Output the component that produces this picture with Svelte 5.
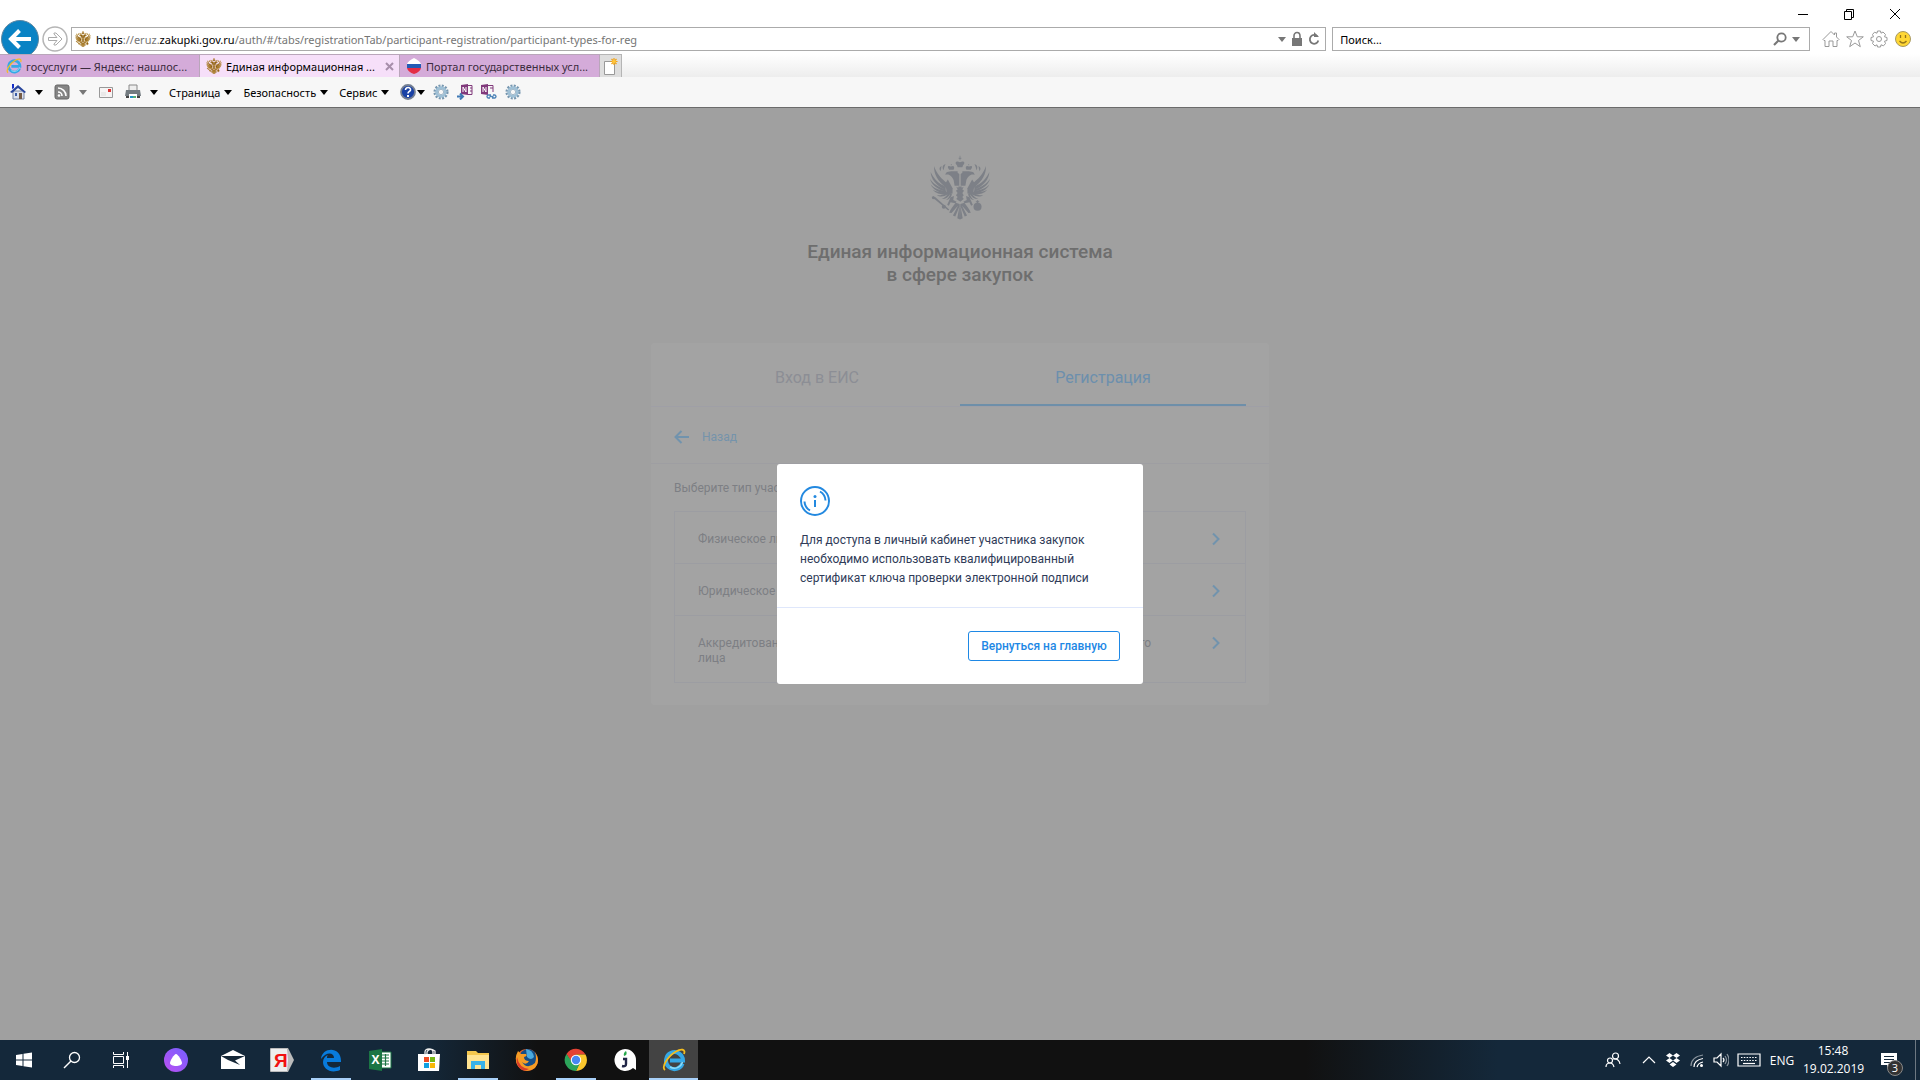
<script>
  let search = '';
  let activeTab = 'register';

  const participantTypes = [
    'Физическое лицо',
    'Юридическое лицо',
    'Аккредитованный филиал или представительство иностранного юридического лица',
  ];
</script>

{#snippet eagle()}
  <svg class="eagle" viewBox="58 28 184 192" aria-hidden="true">
    <g id="half">
      <path d="M73 60C72 84 84 106 109 124L114 112C96 100 80 82 73 60Z" />
      <path d="M63 78C63 98 80 120 107 131L108 122C88 113 72 99 63 78Z" />
      <path d="M61 98C65 116 84 131 108 136L107 129C88 124 71 114 61 98Z" />
      <path d="M63 115C70 131 88 139 108 142L110 134C90 133 74 127 63 115Z" />
      <path d="M69 131C78 142 94 146 110 145L112 137C96 140 80 138 69 131Z" />
      <path d="M81 147C90 153 103 152 113 145L117 137C104 144 92 148 81 147Z" />
      <path d="M96 158C106 159 116 153 121 143L117 138C112 148 104 155 96 158Z" />
      <path d="M108 161C118 160 125 152 126 143L121 142C119 151 114 158 108 161Z" />
      <path d="M106 112L114 100L128 126V142L112 145Z" />
      <path d="M107 87C107 76 116 75 143 76V80L148 84V119H134L131 102C127 91 116 82 107 87Z" />
      <path d="M118 71C110 61 116 58 123 62C130 57 136 62 131 71Z" />
      <path d="M101 73C96 63 99 57 107 54L104 62ZM92 76C87 68 89 63 95 60L94 68Z" />
      <path d="M123 54H125V58H123Z" />
      <path d="M122 153L132 149L130 161L140 166L136 171L122 168L117 178L112 175Z" />
      <path d="M149 173L137 169C130 178 121 189 118 199L125 200L144 178L129 207L136 210L148 181L142 215L150 219Z" />
    </g>
    <use href="#half" transform="matrix(-1 0 0 1 300 0)" />
    <path d="M149 30H151V36H154V39H151V43H149V39H146V36H149ZM141 58C132 49 140 43 150 49C160 43 168 49 159 58L157 64H143Z" />
    <path d="M139 122L145 125V121H155V125L161 122L157 130L162 134L157 140L161 147L157 152L161 158L151 166L139 158L143 152L138 147L143 140L138 134L143 130Z" />
    <path d="M71 149L77 153L118 189L115 192L75 159L68 158L66 152Z" />
    <circle cx="102" cy="181" r="6" />
    <circle cx="202" cy="181" r="12" />
    <path d="M200 162H204V170H200ZM197 165H207V168H197Z" />
  </svg>
{/snippet}

{#snippet gear()}
  <svg class="gear" viewBox="0 0 18 18" aria-hidden="true">
    <circle cx="9" cy="9" r="7" fill="none" stroke="#7797b0" stroke-width="3" stroke-dasharray="2.2 1.465" />
    <circle cx="9" cy="9" r="4.8" fill="none" stroke="#9fc0d6" stroke-width="3.2" />
    <circle cx="9" cy="9" r="3" fill="#f7f7f7" stroke="#7797b0" stroke-width=".7" />
  </svg>
{/snippet}

{#snippet arrow()}
  <svg class="arrow" viewBox="0 0 8 5" aria-hidden="true"><path d="M0 0H8L4 5Z" fill="currentColor" /></svg>
{/snippet}

{#snippet ie()}
  <svg class="ie" viewBox="0 0 24 24" aria-hidden="true">
    <path d="M20.5 15.5A8.5 8.5 0 1 1 21 12.5H8" fill="none" stroke="#35a8e6" stroke-width="4" />
    <path d="M20.5 14A8.5 8.5 0 0 1 8 19" fill="none" stroke="#8bdcf8" stroke-width="1.5" />
    <path d="M3 22C-1 19 6 8 14 3.5C19 .5 24 1 22 6" fill="none" stroke="#f3bd20" stroke-width="1.8" />
  </svg>
{/snippet}

<div class="desktop">
  <header class="browser">
    <div class="window-buttons">
      <button aria-label="Свернуть"><svg viewBox="0 0 12 12"><path d="M1 6.5H11" /></svg></button>
      <button aria-label="Восстановить"><svg viewBox="0 0 12 12"><path d="M1.5 3.5H8.5V11.5H1.5ZM3.5 3V1.5H10.5V9.5H9" /></svg></button>
      <button aria-label="Закрыть"><svg viewBox="0 0 12 12"><path d="M1 1L11 11M11 1L1 11" /></svg></button>
    </div>

    <div class="address-row">
      <button class="back" aria-label="Назад">
        <svg viewBox="0 0 38 38">
          <circle cx="19" cy="19" r="18.5" fill="#0a83c4" stroke="#5d86a0" />
          <path d="M30 19H11M18.5 10.500L10 19L18.500 27.500" fill="none" stroke="#fff" stroke-width="4" />
        </svg>
      </button>
      <button class="forward" aria-label="Вперед">
        <svg viewBox="0 0 26 26">
          <circle cx="13" cy="13" r="12" fill="#fff" stroke="#b5b5b5" stroke-width="1.500" />
          <path d="M6.500 11.500H15L12 8V7H14L20 13L14 19H12V18L15 14.500H6.500Z" fill="#fff" stroke="#aaa" />
        </svg>
      </button>
      <div class="url">
        <span class="favicon gold">{@render eagle()}</span>
        <span class="url-text"><b>https</b>://eruz.<b>zakupki.gov.ru</b>/auth/#/tabs/registrationTab/participant-registration/participant-types-for-reg</span>
        <span class="url-tools">
          {@render arrow()}
          <svg viewBox="0 0 12 16" width="12" height="16"><path d="M1 7H11V15H1Z" fill="#777" /><path d="M3 8V5A3 3.500 0 0 1 9 5V8" fill="none" stroke="#777" stroke-width="1.600" /></svg>
          <svg viewBox="0 0 12 16" width="12" height="16"><path d="M9.500 5.500A4.300 4.500 0 1 0 10.300 9.500" fill="none" stroke="#777" stroke-width="1.800" /><path d="M6 1L11 6H6Z" fill="#777" /></svg>
        </span>
      </div>
      <div class="search">
        <input type="text" bind:value={search} placeholder="Поиск..." aria-label="Поиск" />
        <svg viewBox="0 0 14 14" width="14" height="14"><circle cx="8.500" cy="5.500" r="4.200" fill="none" stroke="#777" stroke-width="1.800" /><path d="M5.500 8.500L1 13" stroke="#777" stroke-width="2.200" /></svg>
        {@render arrow()}
      </div>
      <div class="browser-icons">
        <button aria-label="Домашняя страница"><svg viewBox="0 0 18 18"><path d="M1 9.500L9 1.500L12.500 5V3H14.500V7L17 9.500L16 10.500H15V16.500H11V11H7V16.500H3V10.500H2Z" /></svg></button>
        <button aria-label="Избранное"><svg viewBox="0 0 18 18"><path d="M9 1L11.300 6.800H17.300L12.500 10.500L14.300 16.700L9 13L3.700 16.700L5.500 10.500L.7 6.800H6.700Z" /></svg></button>
        <button aria-label="Сервис"><svg viewBox="0 0 18 18"><path d="M7.500 1H10.500L11 3.200L13 2L15.500 4.500L14.500 6.800L17 7.500V10.500L14.500 11.200L15.500 13.500L13.500 15.800L11 14.800L10.500 17H7.500L7 14.800L5 16L2.500 13.500L3.500 11.200L1 10.500V7.500L3.500 6.800L2.500 4.500L4.500 2.200L7 3.200Z" /><circle cx="9" cy="9" r="2.500" /></svg></button>
        <button aria-label="Отзыв"><svg viewBox="0 0 18 18"><circle cx="9" cy="9" r="7.500" fill="#ffd735" stroke="#a89a63" /><path d="M6.500 5V8M11.500 5V8M5.500 11Q9 15 12.500 11" fill="none" stroke="#94751b" stroke-width="1.300" /></svg></button>
      </div>
    </div>

    <div class="tab-row">
      <button class="browser-tab">
        <span class="favicon">{@render ie()}</span>
        <span class="tab-title">госуслуги — Яндекс: нашлос...</span>
      </button>
      <button class="browser-tab current">
        <span class="favicon gold">{@render eagle()}</span>
        <span class="tab-title">Единая информационная ...</span>
        <svg viewBox="0 0 9 9" width="9" height="9"><path d="M1 1L8 8M8 1L1 8" stroke="#a78eaa" stroke-width="2" /></svg>
      </button>
      <button class="browser-tab">
        <span class="favicon">
          <svg viewBox="0 0 16 16"><path d="M1 6Q2 3 8 0Q14 3 15 6Z" fill="#fff" /><path d="M1 6H15V10H1Z" fill="#245bb5" /><path d="M1 10H15Q14 14 8 16Q2 14 1 10Z" fill="#e42d45" /></svg>
        </span>
        <span class="tab-title">Портал государственных усл...</span>
      </button>
      <button class="new-tab" aria-label="Новая вкладка">
        <svg viewBox="0 0 16 18"><path d="M1.500 4.500H11.500V17.500H1.500Z" fill="#fff" stroke="#999" /><path d="M11 1V8M7.500 4.500H14.500M8.500 2L13.500 7M13.500 2L8.500 7" stroke="#f0a216" stroke-width="1.200" /><circle cx="11" cy="4.500" r="1.800" fill="#ffc63b" /></svg>
      </button>
    </div>

    <nav class="command-bar">
      <button>
        <svg viewBox="0 0 16 16"><path d="M3 7H14V15H3Z" fill="#dce1ee" stroke="#7783a0" /><path d="M0 8L8 1L16 8L14.500 9L8 4L2 9Z" fill="#28459c" /><path d="M2 0H4V4L2 5Z" fill="#152ec6" /><path d="M9 9H12V15H9Z" fill="#755b46" /><path d="M5 9H7V12H5Z" fill="#3b5ca7" /></svg>
        {@render arrow()}
      </button>
      <button class="muted">
        <svg viewBox="0 0 16 16"><rect x="1" y="1" width="14" height="14" rx="2" fill="#858585" stroke="#666" /><path d="M4 8A4 4 0 0 1 8 12M4 4A8 8 0 0 1 12 12" fill="none" stroke="#fff" stroke-width="1.600" /><circle cx="5" cy="11.500" r="1.300" fill="#fff" /></svg>
        {@render arrow()}
      </button>
      <button aria-label="Почта">
        <svg viewBox="0 0 16 16"><path d="M1.500 3.500H14.500V13.500H1.500Z" fill="#f6f4f4" stroke="#999" /><path d="M10 5H13V8H10Z" fill="#d33" /><path d="M3 9H8M3 11H8" stroke="#ddd" /></svg>
      </button>
      <button>
        <svg viewBox="0 0 16 16"><path d="M4 1H12V7H4Z" fill="#eee" stroke="#888" /><path d="M1 6H15L16 12H0Z" fill="#737b80" /><path d="M1 12H15V14H1Z" fill="#444" /><path d="M4 10H12V15H4Z" fill="#fff" /><path d="M5 12H8V14H5Z" fill="#2393c5" /><path d="M8 12H11V14H8Z" fill="#55ae76" /></svg>
        {@render arrow()}
      </button>
      <button class="menu">Страница {@render arrow()}</button>
      <button class="menu">Безопасность {@render arrow()}</button>
      <button class="menu">Сервис {@render arrow()}</button>
      <div class="addons">
        <button class="help" aria-label="Справка">
          <svg viewBox="0 0 16 16"><circle cx="8" cy="8" r="7" fill="#1941a5" stroke="#747f92" stroke-width="1.800" /><path d="M5.500 6C5.500 2.500 11 3 10.500 6C10.200 7.500 8 7.500 8 9.500" fill="none" stroke="#fff" stroke-width="1.600" /><path d="M7 11H9V13H7Z" fill="#fff" /></svg>
          {@render arrow()}
        </button>
        <button aria-label="Параметры">{@render gear()}</button>
        <button aria-label="Отправить в OneNote">
          <svg viewBox="0 0 16 16"><path d="M4 1L11 0V11L4 10Z" fill="#80397b" /><path d="M11 1.500H15V10.500H11M13 4H15M13 7H15" fill="none" stroke="#80397b" /><path d="M6 8V3L9 8V3" fill="none" stroke="#fff" /><path d="M0 12.500H5M3 9.500L6 12.500L3 15.500" fill="none" stroke="#3e79b5" stroke-width="2" /></svg>
        </button>
        <button aria-label="Связанные заметки OneNote">
          <svg viewBox="0 0 16 16"><path d="M0 1L7 0V11L0 10Z" fill="#80397b" /><path d="M7 1.500H12V8M9 4H12" fill="none" stroke="#80397b" /><path d="M2 8V3L5 8V3" fill="none" stroke="#fff" /><path d="M9 14H7Q5 12.500 7 11H10M12 11H14Q16 12.500 14 14H11M8.500 12.500H12.500" fill="none" stroke="#4d83b7" stroke-width="1.400" /></svg>
        </button>
        <button aria-label="Настройки">{@render gear()}</button>
      </div>
    </nav>
  </header>

  <main class="page">
    <div class="logo">{@render eagle()}</div>
    <h1>Единая информационная система<br />в сфере закупок</h1>

    <section class="card">
      <div class="tabs">
        <button class:active={activeTab === 'login'} on:click={() => (activeTab = 'login')}>Вход в ЕИС</button>
        <button class:active={activeTab === 'register'} on:click={() => (activeTab = 'register')}>Регистрация</button>
      </div>
      <a class="back-link" href="#/tabs/registrationTab">
        <svg viewBox="0 0 16 14" width="16" height="14"><path d="M15 7H2M7.500 1L1.500 7L7.500 13" /></svg>
        Назад
      </a>
      <div class="types">
        <p>Выберите тип участника закупок</p>
        <ul>
          {#each participantTypes as type}
            <li>
              <a href="#/tabs/registrationTab/participant-registration">
                <span>{type}</span>
                <svg viewBox="0 0 8 14" width="8" height="14"><path d="M1 1.500L6.500 7L1 12.500" /></svg>
              </a>
            </li>
          {/each}
        </ul>
      </div>
    </section>

    <div class="overlay">
      <div class="modal" role="dialog" aria-modal="true" aria-labelledby="modal-text">
        <div class="modal-body">
          <svg viewBox="1 1 30 30" width="30" height="30">
            <circle cx="16" cy="16" r="14" stroke-width="2" />
            <path d="M21 6.500A11 11 0 0 1 26.500 15.500M5.500 16.500A11 11 0 0 0 11 25.500M16 15V22" stroke-width="2" />
            <circle class="dot" cx="16" cy="11.500" r="1.500" />
          </svg>
          <p id="modal-text">Для доступа в личный кабинет участника закупок необходимо использовать квалифицированный сертификат ключа проверки электронной подписи</p>
        </div>
        <div class="modal-footer">
          <button>Вернуться на главную</button>
        </div>
      </div>
    </div>
  </main>

  <footer class="taskbar">
    <div class="apps">
      <button class="app" aria-label="Пуск"><svg viewBox="0 0 24 24"><path d="M4 7L10.500 6V11.500H4ZM11.500 5.800L20 4.500V11.500H11.500ZM4 12.500H10.500V18L4 17ZM11.500 12.500H20V19.500L11.500 18.200Z" fill="#fff" /></svg></button>
      <button class="app" aria-label="Поиск"><svg viewBox="0 0 24 24"><circle cx="14.500" cy="9.500" r="5" fill="none" stroke="#fff" stroke-width="1.300" /><path d="M11 13L4 20" stroke="#fff" stroke-width="1.400" /></svg></button>
      <button class="app" aria-label="Представление задач"><svg viewBox="0 0 24 24"><path d="M5.500 8.500H15.500V15.500H5.500ZM5.500 4V6.500H15.500V4M5.500 20V17.500H15.500V20M19.500 4V20" fill="none" stroke="#fff" /><path d="M18 8H21V12H18Z" fill="#fff" /></svg></button>
      <button class="app wide" aria-label="Алиса">
        <svg viewBox="0 0 24 24"><defs><linearGradient id="alice" x1="1" x2="0" y2="1"><stop stop-color="#735fff" /><stop offset="1" stop-color="#bc50f2" /></linearGradient></defs><circle cx="12" cy="12" r="12" fill="url(#alice)" /><path d="M12 6C14 6 18 13 18 15C18 19 6 19 6 15C6 13 10 6 12 6Z" fill="#fff" /></svg>
      </button>
      <button class="app" aria-label="Почта"><svg viewBox="0 0 24 24"><path d="M0 8L12 2L24 8V21H0Z" fill="#fff" /><path d="M0 8H24L14 12.500L19 17L7 12Z" fill="#162838" /></svg></button>
      <button class="app" aria-label="Яндекс"><svg viewBox="0 0 24 24"><path d="M1 0H18L24 12L18 24H1Q0 24 0 23V1Q0 0 1 0Z" fill="#bbb" /><path d="M1 1H17L18 12L17 23H1Z" fill="#eee" /><text x="4" y="19" class="ya">Я</text></svg></button>
      <button class="app open" aria-label="Edge"><svg viewBox="0 0 24 24"><path d="M2 11C3 -1 22 -2 22 13V14H8C8 20 16 21 21 18V22C12 26 4 21 4 14C4 11 6 8 9 7C8 8 8 9 8 10H15C15 5 8 3 2 11Z" fill="#087bdc" /></svg></button>
      <button class="app" aria-label="Excel"><svg viewBox="0 0 24 24"><path d="M10 4H23V20H10Z" fill="#fff" stroke="#1b7544" /><path d="M14 7H21M14 10H21M14 13H21M14 16H21M17.500 6V18" stroke="#1b7544" stroke-width="1.200" /><path d="M1 3L14 1V23L1 21Z" fill="#1b7544" /><text x="3.500" y="16" class="excel">X</text></svg></button>
      <button class="app" aria-label="Магазин"><svg viewBox="0 0 24 24"><path d="M1 6H23L22 23H1Z" fill="#fff" /><path d="M8 7V4Q8 1 12 1Q16 1 16 4V7M10 6V4Q12 -1 18 3V6" fill="none" stroke="#eee" stroke-width="1.300" /><path d="M7 9H12V14H7Z" fill="#ef4c24" /><path d="M13 9H18V14H13Z" fill="#75b817" /><path d="M7 15H12V20H7Z" fill="#11a0e2" /><path d="M13 15H18V20H13Z" fill="#f7b809" /></svg></button>
      <button class="app open" aria-label="Проводник"><svg viewBox="0 0 24 24"><path d="M1 3H10L12 5H23V21H1Z" fill="#f4c74e" /><path d="M1 7H23V21H1Z" fill="#ffe391" /><path d="M5 21V13H19V21H15V17H9V21Z" fill="#38b2e8" /></svg></button>
      <button class="app" aria-label="Firefox"><svg viewBox="0 0 24 24"><circle cx="12" cy="12" r="11" fill="#e8652a" /><circle cx="13" cy="10" r="9" fill="#154d86" /><path d="M11 1Q18 2 19 9Q16 13 12 9Z" fill="#4aa9df" /><path d="M3 3L6 6L11 6Q13 8 9 9Q9 13 14 13Q11 18 7 14Q12 22 20 15Q22 10 20 4Q26 13 20 20Q11 26 4 19Q-2 12 3 3Z" fill="#f59c25" /><path d="M2 9Q4 20 14 21Q8 25 3 18Q1 14 2 9Z" fill="#d93d28" /></svg></button>
      <button class="app open" aria-label="Chrome"><svg viewBox="0 0 24 24"><path d="M2.500 6A11 11 0 0 1 21.500 6.500H12L7 14Z" fill="#e34234" /><path d="M21.500 6.500A11 11 0 0 1 12 23L16 14L12 6.500Z" fill="#fbc72d" /><path d="M2.500 6A11 11 0 0 0 12 23L16 15L8 14Z" fill="#2ca45a" /><circle cx="12" cy="12" r="5.200" fill="#fff" /><circle cx="12" cy="12" r="4.200" fill="#4787f2" /></svg></button>
      <button class="app" aria-label="Jinn"><svg viewBox="0 0 24 24"><path d="M12 1A11 11 0 1 0 20 20L23 22V12A11 11 0 0 0 12 1Z" fill="#fff" /><path d="M10 11H13V16Q13 19 9 18" fill="none" stroke="#222748" stroke-width="2.400" /><path d="M11 8Q10 5 13 3Q15 7 11 8Z" fill="#26a84c" /></svg></button>
      <button class="app running" aria-label="Internet Explorer">{@render ie()}</button>
    </div>

    <div class="tray">
      <svg viewBox="0 0 16 16"><circle cx="10.500" cy="4" r="3" /><circle cx="5" cy="8.500" r="2.500" /><path d="M1 15Q1 11 5 11Q8 11 9 15M8 7Q14 6 15 12" /></svg>
      <svg class="chevron" viewBox="0 0 16 16"><path d="M2 11L8 5L14 11" /></svg>
      <svg viewBox="0 0 16 16"><path class="solid" d="M4.500 1L8 3.500L4.500 6L1 3.500ZM11.500 1L15 3.500L11.500 6L8 3.500ZM4.500 6L8 8.500L4.500 11L1 8.500ZM11.500 6L15 8.500L11.500 11L8 8.500ZM8 10L11.500 12.500L8 15L4.500 12.500Z" /></svg>
      <svg viewBox="0 0 16 16"><path d="M2 14Q2 5 14 3" opacity=".5" /><path d="M5 15Q5 8 14 6.500M8 15Q9 11 14 10" /><circle class="solid" cx="12.500" cy="13.500" r="1.500" /></svg>
      <svg viewBox="0 0 16 16"><path d="M1 6H4L8 2V14L4 10H1ZM10 6Q12 8 10 10" /><path d="M12 4Q15 8 12 12M14 2Q18 8 14 14" opacity=".5" /></svg>
      <svg class="keyboard" viewBox="0 0 24 16"><path d="M1 2H23V14H1Z" /><path d="M4 5.500H20M4 8.500H20" stroke-dasharray="1.500 1.300" /><path d="M6 11.500H18" /></svg>
      <button class="lang">ENG</button>
      <time class="clock" datetime="2019-02-19T15:48">15:48<br />19.02.2019</time>
      <button class="notices" aria-label="Уведомления">
        <svg viewBox="0 0 16 16"><path class="solid" d="M0 1H16V13H9L6 16V13H0Z" /><path class="lines" d="M3 4.500H13M3 7.500H13M3 10.500H9" /></svg>
        <span class="count">3</span>
      </button>
    </div>
  </footer>
</div>

<style>
  :global(body) {
    margin: 0;
  }

  * {
    box-sizing: border-box;
  }

  button {
    padding: 0;
    border: none;
    background: none;
    font: inherit;
    color: inherit;
  }

  a {
    text-decoration: none;
    color: inherit;
  }

  svg {
    display: block;
    flex: none;
  }

  .desktop {
    display: flex;
    flex-direction: column;
    min-height: 100vh;
    font-family: 'Open Sans', 'Noto Sans', sans-serif;
    font-size: 12px;
  }

  .eagle {
    width: 100%;
    height: 100%;
    fill: currentColor;
  }

  .ie {
    width: 100%;
    height: 100%;
  }

  .arrow {
    width: 8px;
    height: 5px;
  }

  .favicon {
    flex: none;
    width: 16px;
    height: 16px;
  }

  .gold {
    color: #8a5c12;
  }

  .gold .eagle,
  .gold :global(.eagle) {
    stroke: #b3872a;
    stroke-width: 4;
  }

  /* browser chrome */
  .browser {
    display: flex;
    flex-direction: column;
    background: #fff;
    font-family: 'Noto Sans', sans-serif;
    font-size: 11px;
  }

  .window-buttons {
    display: flex;
    justify-content: flex-end;
    height: 27px;
    padding-right: 2px;
  }

  .window-buttons button {
    display: grid;
    place-items: center;
    width: 46px;
  }

  .window-buttons svg {
    width: 12px;
    height: 12px;
    fill: none;
    stroke: #000;
  }

  .address-row {
    display: flex;
    align-items: center;
    height: 24px;
    margin-bottom: 3px;
    padding: 0 8px 0 1px;
  }

  .back svg {
    width: 38px;
    height: 38px;
  }

  .forward {
    margin: 0 3px;
  }

  .forward svg {
    width: 26px;
    height: 26px;
  }

  .url {
    display: flex;
    flex: 1;
    align-items: center;
    gap: 5px;
    min-width: 0;
    height: 24px;
    margin-right: 6px;
    padding: 0 5px 0 3px;
    border: 1px solid #ababab;
  }

  .url-text {
    flex: 1;
    overflow: hidden;
    white-space: nowrap;
    color: #757575;
  }

  .url-text b {
    font-weight: 400;
    color: #000;
  }

  .url-tools {
    display: flex;
    align-items: center;
    gap: 5px;
    color: #777;
  }

  .search {
    display: flex;
    align-items: center;
    gap: 5px;
    width: 25%;
    height: 24px;
    padding: 0 9px 0 7px;
    border: 1px solid #ababab;
    color: #777;
  }

  .search input {
    flex: 1;
    min-width: 0;
    padding: 0;
    border: none;
    outline: none;
    font: inherit;
    color: #000;
  }

  .search input::placeholder {
    color: #000;
    opacity: 1;
  }

  .browser-icons {
    display: flex;
    gap: 6px;
    margin-left: 12px;
  }

  .browser-icons svg {
    width: 18px;
    height: 18px;
    fill: #fff;
    stroke: #999;
  }

  .tab-row {
    display: flex;
    height: 23px;
    background: linear-gradient(#fff, #ededed);
  }

  .browser-tab {
    display: flex;
    align-items: center;
    gap: 4px;
    width: 200px;
    padding: 0 5px 0 6px;
    border-top: 1px solid #b9a6ba;
    border-right: 1px solid #b9a6ba;
    background: #d4abd9;
    color: #3b2c3d;
    text-align: left;
  }

  .browser-tab.current {
    background: #f6dff9;
    color: #000;
  }

  .tab-title {
    flex: 1;
    white-space: nowrap;
  }

  .new-tab {
    display: grid;
    place-items: center;
    width: 22px;
    border: 1px solid #b5b5b5;
    border-left: none;
    border-bottom: none;
    background: #dedede;
  }

  .new-tab svg {
    width: 16px;
    height: 18px;
  }

  .command-bar {
    display: flex;
    align-items: center;
    gap: 11px;
    height: 31px;
    padding: 0 10px;
    border-bottom: 1px solid #6b6b6b;
    background: #f7f7f7;
  }

  .command-bar button {
    display: flex;
    align-items: center;
    gap: 9px;
  }

  .command-bar .menu {
    gap: 4px;
  }

  .command-bar .muted .arrow {
    color: #777;
  }

  .command-bar svg:not(.arrow) {
    width: 16px;
    height: 16px;
  }

  .addons {
    display: flex;
    gap: 8px;
  }

  .command-bar .help {
    gap: 1px;
  }

  /* site */
  .page {
    position: relative;
    display: flex;
    flex: 1;
    flex-direction: column;
    align-items: center;
    padding: 47px 0;
    background: #a0a0a0;
    font-family: Roboto, sans-serif;
  }

  .logo {
    width: 62px;
    height: 65px;
    color: #7d8087;
  }

  h1 {
    margin: 20px 0 57px;
    font-size: 19px;
    font-weight: 500;
    line-height: 23px;
    text-align: center;
    color: #6e6e6e;
  }

  .card {
    width: 618px;
    max-width: 100%;
    border-radius: 3px;
    background: #a3a3a3;
  }

  .tabs {
    display: flex;
    height: 64px;
    padding: 0 23px;
    border-bottom: 1px solid #9f9fa6;
    font-size: 16px;
    color: #8c8e95;
  }

  .tabs button {
    flex: 1;
    padding-top: 8px;
    border-bottom: 2px solid transparent;
  }

  .tabs .active {
    border-color: #6e8fa9;
    color: #6c8fad;
  }

  .back-link {
    display: flex;
    align-items: center;
    gap: 12px;
    height: 57px;
    padding: 3px 23px 0;
    border-bottom: 1px solid #9e9ea2;
    color: #7593ab;
  }

  .card svg {
    fill: none;
    stroke: #7193ad;
    stroke-width: 2;
  }

  .types {
    padding: 17px 23px 22px;
    line-height: 15px;
    color: #7d7f84;
  }

  .types p {
    margin: 0 0 15px;
  }

  .types ul {
    margin: 0;
    padding: 0;
    border: 1px solid #9c9da2;
    list-style: none;
  }

  .types li + li {
    border-top: 1px solid #9c9da2;
  }

  .types a {
    display: flex;
    align-items: flex-start;
    justify-content: space-between;
    padding: 20px 25px 16px 23px;
  }

  .types a span {
    width: 480px;
  }

  .overlay {
    position: absolute;
    inset: 0;
    display: grid;
    place-items: center;
  }

  .modal {
    width: 366px;
    border-radius: 3px;
    background: #fff;
    color: #2f3b58;
  }

  .modal-body {
    padding: 22px 23px 19px;
    border-bottom: 1px solid #dfe7fb;
  }

  .modal-body svg {
    fill: none;
    stroke: #2389e0;
  }

  .modal-body .dot {
    fill: #2389e0;
    stroke: none;
  }

  .modal-body p {
    max-width: 308px;
    margin: 15px 0 0;
    line-height: 19px;
  }

  .modal-footer {
    display: flex;
    justify-content: flex-end;
    padding: 23px;
  }

  .modal-footer button {
    width: 152px;
    height: 30px;
    border: 1px solid #1e88e5;
    border-radius: 3px;
    font-weight: 500;
    color: #1e88e5;
  }

  /* taskbar */
  .taskbar {
    display: flex;
    justify-content: space-between;
    height: 40px;
    background: linear-gradient(90deg, #14283a 0, #14283a 22%, #111 28%, #111 68%, #14283a 78%);
    color: #fff;
  }

  .apps {
    display: flex;
  }

  .app {
    display: grid;
    place-items: center;
    width: 49px;
    border-bottom: 2px solid transparent;
    border-top: 2px solid transparent;
  }

  .app:nth-child(-n + 3) {
    width: 48px;
  }

  .app.wide {
    width: 64px;
  }

  .app svg {
    width: 24px;
    height: 24px;
  }

  .app.open {
    background: linear-gradient(#a8d0f8, #a8d0f8) center bottom / 40px 2px no-repeat border-box;
  }

  .app.running {
    border-top-color: #434343;
    border-bottom-color: #a8d0f8;
    background: #434343;
  }

  .ya {
    font: 700 19px 'Liberation Sans', sans-serif;
    fill: #f11212;
  }

  .excel {
    font: 700 12px 'Open Sans', sans-serif;
    fill: #fff;
  }

  .tray {
    display: flex;
    align-items: center;
    gap: 8px;
    padding-right: 4px;
  }

  .tray svg {
    width: 16px;
    height: 16px;
    fill: none;
    stroke: #fff;
    stroke-width: 1.2;
  }

  .tray .chevron {
    margin-left: 12px;
  }

  .tray .solid {
    fill: #fff;
    stroke: none;
  }

  .tray .keyboard {
    width: 24px;
  }

  .lang {
    width: 26px;
  }

  .clock {
    width: 60px;
    line-height: 18px;
    text-align: center;
  }

  .notices {
    position: relative;
    display: grid;
    place-items: center;
    width: 53px;
    height: 100%;
    margin-left: -8px;
    border-right: 1px solid #6d7882;
  }

  .notices .lines {
    stroke: #14283a;
  }

  .count {
    position: absolute;
    right: 12px;
    bottom: 4px;
    width: 16px;
    height: 16px;
    border: 1px solid #888;
    border-radius: 50%;
    background: #333;
    font-size: 11px;
    line-height: 14px;
  }
</style>
